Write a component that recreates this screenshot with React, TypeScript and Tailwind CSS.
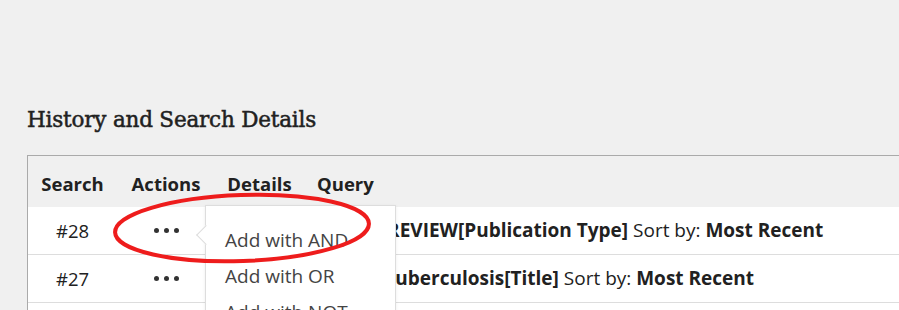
import React from "react";

const sans = { fontFamily: '"Open Sans", "Noto Sans", sans-serif' };

export default function App() {
  return (
    <div className="w-[899px] h-[310px] overflow-hidden bg-[#f0f0f0] relative" style={sans}>
      <div className="pt-[104px] pl-[27px]">
        <h2
          className="text-[21.5px] leading-[32px] tracking-[-0.2px] text-[#212121] font-normal [-webkit-text-stroke:0.5px_#212121]"
          style={{ fontFamily: '"DejaVu Serif", "Liberation Serif", serif' }}
        >
          History and Search Details
        </h2>
      </div>
      <div className="ml-[27px] mt-[19px] w-[1000px] border-t border-l border-[#aaaaaa]">
        <div className="flex h-[51px] pt-[4px] items-center text-[18.5px] font-bold text-[#212121]">
          <div className="w-[89px] text-center">Search</div>
          <div className="w-[98px] text-center">Actions</div>
          <div className="w-[89px] text-center">Details</div>
          <div className="pl-[13px]">Query</div>
        </div>
        {[
          { n: "#28", q: "REVIEW[Publication Type]" },
          { n: "#27", q: "tuberculosis[Title]" },
        ].map((r) => (
          <div key={r.n} className="flex h-[48px] items-center bg-white border-b border-[#dddddd] text-[18.5px] text-[#212121]">
            <div className="w-[89px] text-center">{r.n}</div>
            <div className="w-[98px] flex justify-center gap-[5px]">
              <span className="w-[5px] h-[5px] rounded-full bg-[#333]" />
              <span className="w-[5px] h-[5px] rounded-full bg-[#333]" />
              <span className="w-[5px] h-[5px] rounded-full bg-[#333]" />
            </div>
            <div className="w-[89px]" />
            <div className="pl-[13px] whitespace-nowrap text-[19px]">
              Search: <b>{r.q}</b> Sort by: <b>Most Recent</b>
            </div>
          </div>
        ))}
        <div className="h-[48px] bg-white" />
      </div>

      {/* popup menu */}
      <div className="absolute left-[205px] top-[205px] w-[191px] h-[140px] bg-white border border-[#dddddd] shadow-[0_1px_3px_rgba(0,0,0,0.08)]">
        <div className="absolute -left-[7px] top-[22px] w-[14px] h-[14px] bg-white border-l border-b border-[#dddddd] rotate-45" />
        <div className="pt-[16px] pl-[19px] text-[19px] text-[#444] leading-[36px] whitespace-nowrap">
          <div>Add with AND</div>
          <div>Add with OR</div>
          <div>Add with NOT</div>
        </div>
      </div>

      {/* red annotation ellipse */}
      <svg className="absolute left-0 top-0 pointer-events-none" width="899" height="310">
        <ellipse cx="242" cy="228" rx="127" ry="33" fill="none" stroke="#ee1c1c" strokeWidth="4" transform="rotate(-2 242 228)" />
      </svg>
    </div>
  );
}
